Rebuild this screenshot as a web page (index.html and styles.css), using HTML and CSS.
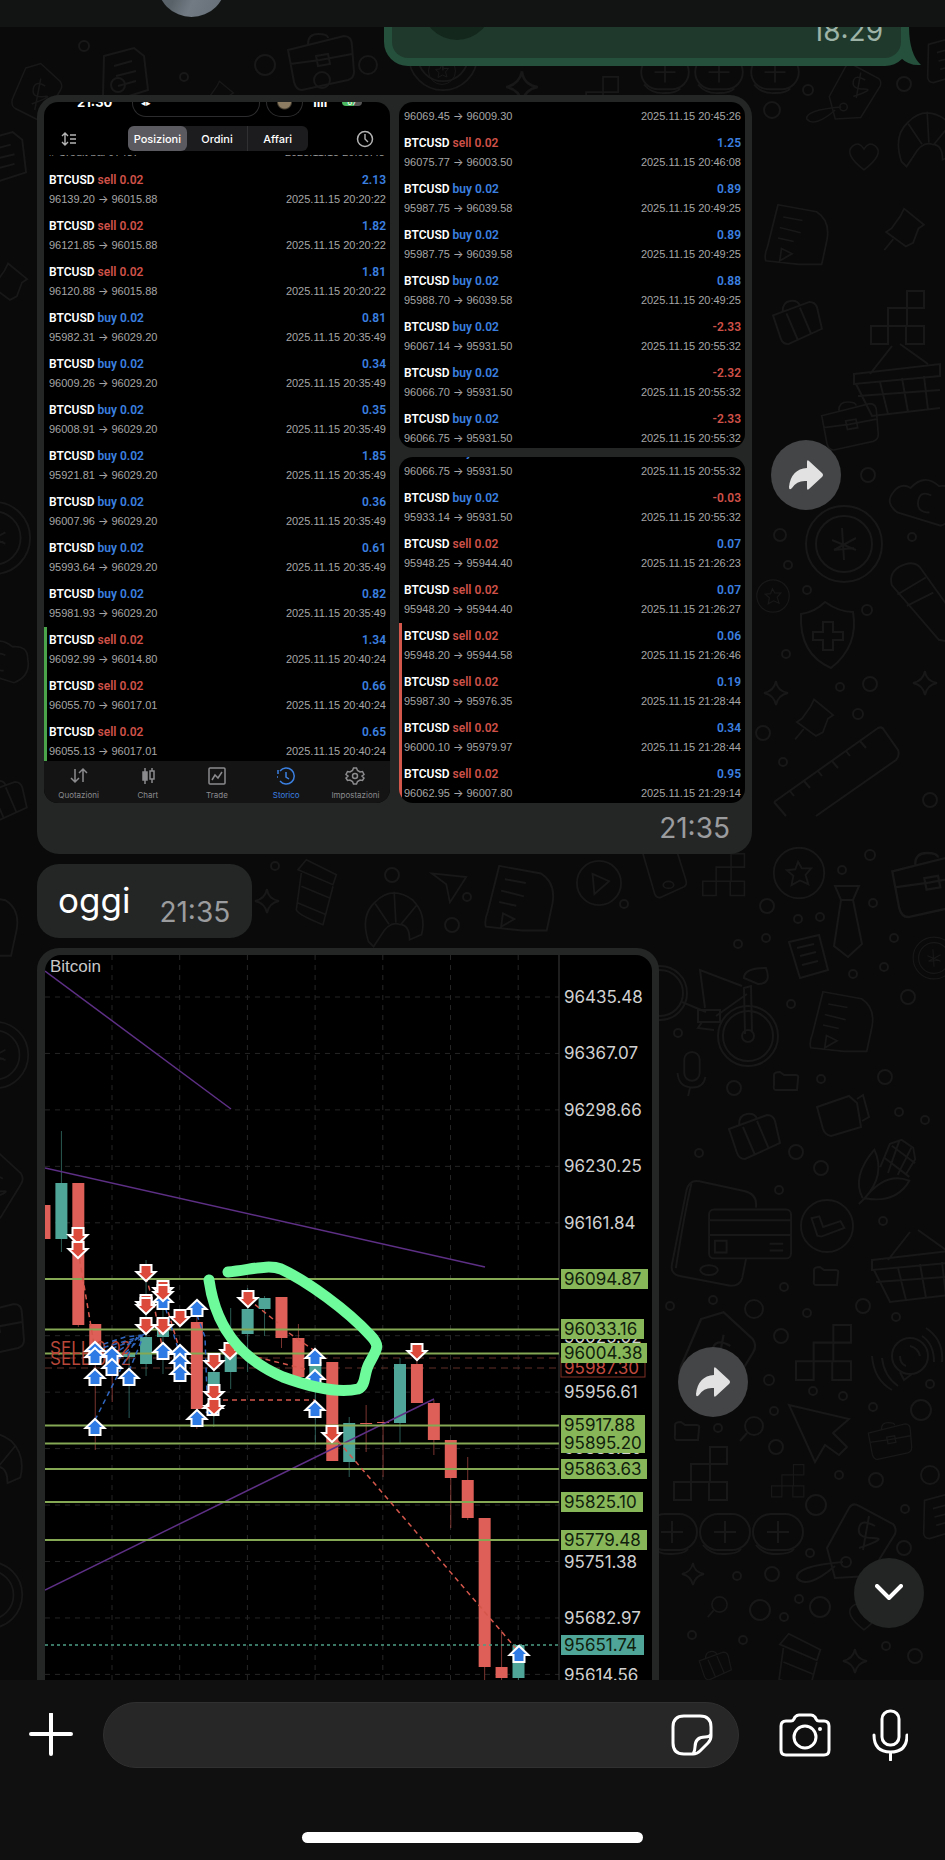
FILE: index.html
```html
<!DOCTYPE html>
<html lang="it">
<head>
  <meta charset="UTF-8" />
  <meta name="viewport" content="width=device-width, initial-scale=1.0" />
  <title>Chat</title>
  <link rel="stylesheet" href="styles.css">
</head>
<body>
  <header class="topbar">
    <div class="avatar"></div>
  </header>

  <main class="chat">
    <svg class="wallpaper" id="wallpaper" width="945" height="1653" viewBox="0 27 945 1653" aria-hidden="true">
      <defs>
        <symbol id="d-tag" viewBox="0 0 70 80" overflow="visible"><path d="M20 8 40 2 66 26Q70 32 66 38L44 74Q40 80 34 76L6 62Q0 58 2 50Z"/><path d="M46 32Q32 24 30 36T44 46T28 56M40 22 32 64"/></symbol>
        <symbol id="d-price" viewBox="0 0 102 80" overflow="visible"><path d="M42 76 34 46 56 6Q60 0 66 4L100 22Q104 26 102 32L76 74ZM82 24Q68 16 66 26T80 36T66 46M76 14 70 48"/><circle cx="53" cy="60" r="5"/><path d="M50 60Q2 64 4 76Q14 88 42 64"/></symbol>
        <symbol id="d-pill" viewBox="0 0 52 42" overflow="visible"><rect x="1" y="1" width="50" height="36" rx="18"/><path d="M4 32Q12 42 26 41Q38 41 42 36M26 8V30M15 19H37"/></symbol>
        <symbol id="d-cursor" viewBox="0 0 64 60" overflow="visible"><path d="M2 2 62 16 46 30 60 44 52 52 38 42 28 59Z"/></symbol>
        <symbol id="d-doc" viewBox="0 0 50 60" overflow="visible"><path d="M4 10 34 2 44 10 48 44 10 56Q4 56 3 50Z"/><path d="M14 20 32 15M16 30 36 25M18 40 36 35"/></symbol>
        <symbol id="d-pin" viewBox="0 0 50 60" overflow="visible"><path d="M24 4 46 22 40 26 34 42 26 46 4 30 10 26 20 12ZM12 38 2 50"/></symbol>
        <symbol id="d-case" viewBox="0 0 70 60" overflow="visible"><path d="M2 18 58 4Q66 4 66 14L68 40Q68 46 62 48L16 58Q10 58 8 50ZM22 12Q22 2 32 2T42 6M4 32 34 28 66 22M30 24 42 22 44 32 32 34Z"/></symbol>
        <symbol id="d-star" viewBox="0 0 60 60" overflow="visible"><circle cx="30" cy="30" r="27"/><path d="M29 18 33 25 43 25 37 32 40 42 31 38 22 43 24 33 17 27 26 26Z"/></symbol>
        <symbol id="d-coin" viewBox="0 0 80 80" overflow="visible"><circle cx="40" cy="40" r="38"/><circle cx="40" cy="40" r="28"/><path d="M38 24 40 56M28 36 52 46M30 46 52 34M30 46 50 44"/></symbol>
        <symbol id="d-tie" viewBox="0 0 30 74" overflow="visible"><path d="M2 2H26L20 16H8ZM8 16 1 62 15 73 29 60 20 16"/></symbol>
        <symbol id="d-note" viewBox="0 0 40 46" overflow="visible"><path d="M1 8 31 1 40 36 12 44ZM9 14 26 10M12 22 28 18M14 31 30 27"/></symbol>
        <symbol id="d-bike" viewBox="0 0 130 100" overflow="visible"><circle cx="98" cy="68" r="30"/><circle cx="98" cy="68" r="25"/><circle cx="98" cy="68" r="6"/><circle cx="10" cy="25" r="27"/><circle cx="10" cy="25" r="23"/><path d="M95 66 94 20 101 18 102 64M92 18 50 2 55 40M97 26 66 48M32 34 56 44M94 10Q94 0 116 0Q122 16 108 16ZM48 42H70V54H48ZM52 54 48 60 64 62"/></symbol>
        <symbol id="d-mic" viewBox="0 0 30 50" overflow="visible"><rect x="8" y="2" width="16" height="30" rx="8"/><path d="M1 24Q2 38 15 39T30 28M14 39 12 48"/></symbol>
        <symbol id="d-bag" viewBox="0 0 54 48" overflow="visible"><path d="M2 16 40 2Q46 2 48 8L53 30 18 46Q12 46 10 40ZM12 12Q12 2 20 1T30 6M16 14 28 42M30 8 42 36"/></symbol>
        <symbol id="d-cam" viewBox="0 0 54 44" overflow="visible"><path d="M2 14 34 3 42 10 46 34 16 43Q10 42 8 36ZM42 6 48 2 54 24 47 28"/></symbol>
        <symbol id="d-corn" viewBox="0 0 62 70" overflow="visible"><path d="M6 62Q-6 40 18 12Q30 38 8 62Q30 34 54 44Q40 68 8 62L2 68M24 30 34 6 46 2 58 10 60 22 50 38M28 20 54 40M36 8 60 26M44 2 32 36M56 10 42 38"/></symbol>
        <symbol id="d-phone" viewBox="0 0 125 112" overflow="visible"><path d="M88 30Q90 16 76 13L30 3Q20 1 17 12L2 88Q0 98 10 100L62 110Q72 110 74 102L78 82"/><path d="M22 5Q14 40 6 92"/><rect x="40" y="32" width="84" height="50" rx="5"/><path d="M40 43H124M40 58H124M46 64H58V76H46ZM102 67H116M102 74H116"/><ellipse cx="40" cy="94" rx="9" ry="5"/></symbol>
        <symbol id="d-mobile" viewBox="0 0 52 60" overflow="visible"><path d="M0 0 14 48Q16 54 22 52L48 40Q52 38 50 32L40 0"/><ellipse cx="30" cy="38" rx="6" ry="4"/></symbol>
        <symbol id="d-check" viewBox="0 0 56 56" overflow="visible"><circle cx="28" cy="28" r="27"/><path d="M12 20 20 18 24 29 42 23 46 30 22 39 18 38Z"/></symbol>
        <symbol id="d-basket" viewBox="0 0 90 76" overflow="visible"><path d="M4 34 90 24V36L4 44ZM6 44 22 76 90 68M8 56 90 50M30 42 38 74M52 38 58 72M74 36 78 70M20 34 42 6M50 4 78 24"/></symbol>
        <symbol id="d-folder" viewBox="0 0 28 20" overflow="visible"><path d="M2 4Q2 1 8 1L12 4H24Q27 4 26 8L25 19H4Q1 19 2 14Z"/></symbol>
        <symbol id="d-spark" viewBox="0 0 26 26" overflow="visible"><path d="M13 1Q14 11 25 13Q15 15 13 25Q11 15 1 13Q11 11 13 1Z"/></symbol>
        <symbol id="d-shield" viewBox="0 0 60 70" overflow="visible"><path d="M4 14Q18 12 28 2Q42 12 56 12Q62 46 34 68Q2 54 4 14ZM26 22H36V32H46V40H36V50H26V40H16V32H26Z"/></symbol>
        <symbol id="d-pencil" viewBox="0 0 70 90" overflow="visible"><path d="M4 26Q0 10 18 4Q30 0 36 10L76 66L74 88L54 84ZM10 36 40 18M20 48 48 34"/></symbol>
        <symbol id="d-ruler" viewBox="0 0 130 90" overflow="visible"><path d="M2 78 106 4Q110 2 112 6L126 26Q128 32 124 36L44 92M2 78 14 92M18 67 22 72M32 57 38 64M46 47 50 52M60 37 66 44M74 27 78 32M88 17 94 24"/></symbol>
        <symbol id="d-cloud" viewBox="0 0 70 50" overflow="visible"><path d="M10 34Q-4 24 6 12Q14 2 24 8Q38-8 54 6Q72 4 72 20Q76 40 56 48ZM46 16Q34 10 32 22T44 34"/></symbol>
        <symbol id="d-cup" viewBox="0 0 56 84" overflow="visible"><path d="M14 2 50 20 46 32 4 14ZM8 18 2 62Q4 68 34 80L46 34M8 34 42 48M4 54 38 68"/></symbol>
        <symbol id="d-roll" viewBox="0 0 70 70" overflow="visible"><path d="M4 60Q-6 30 12 14Q32-6 56 12Q72 28 66 52L52 58Q52 40 40 40Q28 36 18 54L10 66ZM12 16 28 40M34 2 36 38M60 18 42 40"/></symbol>
        <symbol id="d-plane" viewBox="0 0 42 34" overflow="visible"><path d="M2 2 40 6 22 34 18 14Z"/></symbol>
        <symbol id="d-play" viewBox="0 0 50 56" overflow="visible"><circle cx="25" cy="28" r="24"/><path d="M18 18 36 26 20 40Z"/></symbol>
        <symbol id="d-page" viewBox="0 0 80 80" overflow="visible"><path d="M16 2 60 10Q76 20 72 42L66 70H40L2 66Q0 60 4 50ZM22 16 44 20M18 28 42 34M16 40 34 44M20 52 32 58 18 66Z"/></symbol>
        <symbol id="d-blocks" viewBox="0 0 56 56" overflow="visible"><path d="M1 36H18V54H1ZM18 18H37V36H18ZM37 1H54V18H37ZM36 36H54V54H36Z"/></symbol>
        <symbol id="d-heart" viewBox="0 0 40 36" overflow="visible"><path d="M20 34Q-6 14 6 4Q14-2 20 8Q26-2 34 4Q46 14 20 34Z"/></symbol>
        <symbol id="d-lens" viewBox="0 0 26 26" overflow="visible"><circle cx="16" cy="10" r="9"/><path d="M9 17 2 25"/></symbol>
        <symbol id="d-voice" viewBox="0 0 72 64" overflow="visible"><circle cx="38" cy="28" r="18"/><path d="M28 44 32 52 40 46M38 18Q46 20 48 28M28 28Q28 36 34 38M50 8Q62 16 62 34M54 0Q72 12 70 34M10 30Q12 48 26 58M0 28Q2 52 20 62"/></symbol>
      </defs>
    </svg>

    <div class="bubble bubble-out">
      <div class="quote"><span class="quote-dot"></span></div>
      <time>18:29</time>
      <svg class="tail" width="20" height="40" viewBox="0 0 20 40" aria-hidden="true"><path d="M0 0H8Q8 28 20 39Q8 40 0 32Z" fill="#25503c"/></svg>
    </div>

    <div class="message message-album">
      <div class="bubble album">
        <div class="album-grid">
          <section class="shot shot-tall">
            <div class="shot-status">
              <b>21:30</b>
              <span class="island">◂▸</span>
              <span class="island-dot"></span>
              <span class="signal">ııll</span>
              <span class="battery">67</span>
            </div>
            <div class="shot-toolbar">
              <svg width="16" height="16" viewBox="0 0 16 16" aria-hidden="true"><path d="M4 2V14M1 5 4 2 7 5M1 11 4 14 7 11M9 4H15M9 8H15M9 12H15" fill="none" stroke="#b4b4b4" stroke-width="1.4"/></svg>
              <div class="segments">
                <button class="active" type="button">Posizioni</button>
                <button type="button">Ordini</button>
                <button type="button">Affari</button>
              </div>
              <svg width="18" height="18" viewBox="0 0 18 18" aria-hidden="true"><path d="M9 4V9L12 12" fill="none" stroke="#b4b4b4" stroke-width="1.4"/><circle cx="9" cy="9" r="7.5" fill="none" stroke="#b4b4b4" stroke-width="1.5"/></svg>
            </div>
            <div class="cut-line"><span># Credit bal 97487</span><span>2025.11.15 20:00:48</span></div>
            <div class="trades trades-first" id="tradesA"></div>
            <nav class="tabbar">
              <a href="#"><svg viewBox="0 0 20 20" aria-hidden="true"><path d="M6 3V16M2 12 6 16 10 12M14 16V3M10 7 14 3 18 7"/></svg>Quotazioni</a>
              <a href="#"><svg viewBox="0 0 20 20" aria-hidden="true"><path d="M7 2V18M14 2V5M14 13V17"/><path d="M5 6H9V14H5Z" fill="currentColor"/><path d="M12 5H16V13H12Z"/></svg>Chart</a>
              <a href="#"><svg viewBox="0 0 20 20" aria-hidden="true"><rect x="2" y="2" width="16" height="16" rx="1"/><path d="M5 14 8 9 11 12 15 6"/></svg>Trade</a>
              <a href="#" class="active"><svg viewBox="0 0 20 20" aria-hidden="true"><path d="M4 5A8 8 0 1 1 4 15M2 8V4M2 11H1M10 6V11L13 13"/></svg>Storico</a>
              <a href="#"><svg viewBox="0 0 20 20" aria-hidden="true"><circle cx="10" cy="10" r="2.5"/><path d="M8.500 2H11.500L12.500 4.500 15 6 17.500 5.500 19 8.500 17 10 19 12 17.500 14.500 15 14 12.500 15.500 11.500 18H8.500L7.500 15.500 5 14 2.500 14.500 1 12 3 10 1 8.500 2.500 5.500 5 6 7.500 4.500Z"/></svg>Impostazioni</a>
            </nav>
          </section>
          <section class="shot"><div class="trades" id="tradesB"></div></section>
          <section class="shot"><div class="trades" id="tradesC"></div></section>
        </div>
        <time>21:35</time>
      </div>
      <button class="round forward" type="button" aria-label="Inoltra">
        <svg width="36" height="32" viewBox="0 0 36 32" aria-hidden="true"><path d="M19 3Q19 0 21 2L34 14Q36 16 34 18L21 30Q19 32 19 29V22Q9 21 4 29Q1 32 1 28Q3 10 19 9Z" fill="#e2e2e2"/></svg>
      </button>
    </div>

    <div class="bubble text-bubble">
      <p>oggi</p>
      <time>21:35</time>
    </div>

    <div class="message message-chart">
      <div class="bubble chart-bubble">
        <svg class="chart" id="chart" viewBox="0 0 607 760" role="img" aria-label="Bitcoin">
          <defs>
            <path id="down" d="M-5.500-8H5.500V-1H9.500L0 8-9.500-1H-5.500Z" fill="#dc4a3c" stroke="#fff" stroke-width="2"/>
            <path id="up" d="M-5.500 8H5.500V1H9.500L0-8-9.500 1H-5.500Z" fill="#2f7be6" stroke="#fff" stroke-width="2"/>
          </defs>
        </svg>
      </div>
      <button class="round forward" type="button" aria-label="Inoltra">
        <svg width="36" height="32" viewBox="0 0 36 32" aria-hidden="true"><path d="M19 3Q19 0 21 2L34 14Q36 16 34 18L21 30Q19 32 19 29V22Q9 21 4 29Q1 32 1 28Q3 10 19 9Z" fill="#e2e2e2"/></svg>
      </button>
    </div>

    <button class="round scroll-down" type="button" aria-label="Vai in fondo">
      <svg width="28" height="18" viewBox="0 0 28 18" aria-hidden="true"><path d="M2 2 14 14 26 2" fill="none" stroke="#fff" stroke-width="4" stroke-linecap="round" stroke-linejoin="round"/></svg>
    </button>
  </main>

  <footer class="composer">
    <div class="composer-row">
      <button type="button" aria-label="Allega">
        <svg width="44" height="44" viewBox="0 0 44 44" aria-hidden="true"><path d="M22 1V41M2 21H42"/></svg>
      </button>
      <label class="field">
        <input type="text" aria-label="Messaggio">
        <svg width="42" height="42" viewBox="0 0 42 42" aria-hidden="true"><path d="M22 40H13Q2 40 2 29V13Q2 2 13 2H29Q40 2 40 13V22Q40 26 37 29L29 37Q26 40 22 40ZM22 40Q24 37 24 33Q24 23 34 23Q39 23 40 20"/></svg>
      </label>
      <button type="button" aria-label="Fotocamera">
        <svg width="52" height="44" viewBox="0 0 52 44" aria-hidden="true"><path d="M7 8H12Q14 8 15 6L16 4Q18 2 20 2H32Q34 2 36 4L37 6Q38 8 40 8H45Q50 8 50 13V37Q50 42 45 42H7Q2 42 2 37V13Q2 8 7 8Z"/><circle cx="26" cy="24" r="11"/><circle cx="41" cy="16" r="2" class="fill"/></svg>
      </button>
      <button type="button" aria-label="Registra">
        <svg width="36" height="52" viewBox="0 0 36 52" aria-hidden="true"><rect x="10" y="2" width="17" height="34" rx="8"/><path d="M2 26Q2 43 18.500 43T35 26M18.500 43V51"/></svg>
      </button>
    </div>
    <div class="home-bar"></div>
  </footer>

  <script src="script.js"></script>
</body>
</html>
```
FILE: styles.css
```css
* {
  box-sizing: border-box;
}
body {
  margin: 0;
  height: 100vh;
  display: flex;
  flex-direction: column;
  background: #0a0a0a;
  color: #fff;
  font-family: Inter, "Liberation Sans", sans-serif;
  overflow: hidden;
}
button {
  padding: 0;
  border: none;
  background: none;
  color: inherit;
  font: inherit;
}
svg {
  display: block;
}
time {
  font-size: 28px;
  line-height: 32px;
  color: #9b9c9e;
}

/* header */
.topbar {
  flex: none;
  height: 27px;
  padding-left: 157px;
  display: flex;
  align-items: flex-end;
  overflow: hidden;
  background: #111413;
}
.avatar {
  flex: none;
  width: 69px;
  height: 69px;
  margin-bottom: 10px;
  border-radius: 50%;
  background: linear-gradient(115deg, #5a6269 40%, #727b84 60%, #646c74);
}

/* chat */
.chat {
  flex: 1;
  min-height: 0;
  position: relative;
  padding: 0 24px 0 37px;
  display: flex;
  flex-direction: column;
  align-items: flex-start;
  overflow: hidden;
}
.wallpaper {
  position: absolute;
  top: 0;
  left: 0;
  fill: none;
  stroke: #181819;
  stroke-width: 2;
}
.message,
.bubble {
  position: relative;
  flex: none;
}
.message {
  width: 100%;
  display: flex;
  align-items: center;
  gap: 19px;
}
.bubble {
  background: #242626;
  border-radius: 22px;
}

.bubble-out {
  align-self: flex-end;
  width: 525px;
  height: 39px;
  margin-right: 12px;
  padding: 0 8px 8px;
  background: #25503c;
  border-radius: 0 0 24px 24px;
}
.quote {
  height: 31px;
  padding-left: 30px;
  overflow: hidden;
  border-radius: 0 0 16px 16px;
  background: #1f3a2d;
}
.quote-dot {
  display: block;
  width: 70px;
  height: 70px;
  margin-top: -57px;
  border-radius: 50%;
  background: #14271d;
}
.bubble-out time {
  position: absolute;
  right: 26px;
  top: 0;
  height: 20px;
  display: flex;
  align-items: flex-end;
  overflow: hidden;
  color: #9db3a7;
}
.tail {
  position: absolute;
  right: -12px;
  bottom: 0;
}

/* screenshots */
.message-album {
  margin-top: 29px;
}
.album {
  flex: 0 1 715px;
  padding: 7px 7px 0;
}
.album-grid {
  display: grid;
  grid-template-columns: 1fr 1fr;
  grid-template-rows: 346px 346px;
  gap: 9px;
}
.album > time,
.text-bubble time {
  display: block;
}
.album > time {
  padding: 9px 15px 10px;
  text-align: right;
}
.shot {
  overflow: hidden;
  border-radius: 14px;
  background: #000;
}
.shot-tall {
  grid-row: span 2;
  display: flex;
  flex-direction: column;
}
.shot-status {
  flex: none;
  height: 20px;
  padding: 0 28px 0 33px;
  display: flex;
  align-items: flex-start;
  font-size: 13px;
  line-height: 1px;
}
.shot-status .island {
  width: 128px;
  height: 15px;
  margin-left: 20px;
  padding-left: 8px;
  border: 1px solid #2c2c2e;
  border-top: none;
  border-radius: 0 0 14px 14px;
  font-size: 9px;
}
.island-dot {
  width: 37px;
  height: 15px;
  margin-left: 6px;
  border: 1px solid #2c2c2e;
  border-top: none;
  border-radius: 0 0 18px 18px;
  background: radial-gradient(circle at 50% 0, #8c7d62 6px, #000 8px);
}
.signal {
  margin-left: 10px;
  font-weight: 700;
}
.battery {
  width: 20px;
  height: 4px;
  margin-left: auto;
  border-radius: 0 0 4px 4px;
  background: linear-gradient(90deg, #4cb860 60%, #555 60%);
  font-size: 8px;
  text-align: center;
}
.shot-toolbar {
  flex: none;
  height: 33px;
  padding: 0 16px 0 17px;
  display: flex;
  align-items: center;
  justify-content: space-between;
}
.segments {
  width: 180px;
  height: 25px;
  margin-left: 2px;
  display: flex;
  border-radius: 6px;
  background: #1c1c1e;
  font-size: 11px;
  font-weight: 500;
}
.segments button {
  flex: 1;
  border-radius: 6px;
}
.segments .active {
  background: #5b5a60;
}
.segments button:last-child {
  border-left: 1px solid #303033;
  border-radius: 0;
}
.cut-line {
  flex: none;
  height: 3px;
  padding: 0 5px;
  display: flex;
  align-items: flex-end;
  justify-content: space-between;
  overflow: hidden;
  color: #999;
  font: 11px/12px "Liberation Sans", sans-serif;
}
.trades {
  font-family: "Liberation Sans", Arial, sans-serif;
}
.trades-first {
  flex: 1;
  min-height: 0;
  padding-top: 9px;
  overflow: hidden;
}
.trade {
  height: 46px;
  padding: 0 4px 6px 2px;
  display: flex;
  flex-direction: column;
  justify-content: flex-end;
  border-left: 3px solid transparent;
}
.trade.cut {
  height: 28px;
  overflow: hidden;
}
.trade.mark-green {
  border-left-color: #4aa54a;
}
.trade.mark-red {
  border-left-color: #d4574c;
}
.line {
  flex: none;
  display: flex;
  justify-content: space-between;
}
.deal {
  font: 600 12px/22px Roboto, "Open Sans", sans-serif;
}
.prices {
  color: #a6a6a6;
  font-size: 11px;
  line-height: 16px;
}
.arrow {
  font-family: Inter, sans-serif;
}
.red {
  color: #cf5148;
}
.blue {
  color: #3b80e0;
}
.tabbar {
  flex: none;
  height: 42px;
  display: flex;
  background: #141415;
}
.tabbar a {
  flex: 1;
  display: flex;
  flex-direction: column;
  align-items: center;
  gap: 4px;
  padding-top: 5px;
  color: #8b8b8e;
  font-size: 8px;
  line-height: 10px;
  text-decoration: none;
}
.tabbar svg {
  width: 20px;
  height: 20px;
  fill: none;
  stroke: currentColor;
  stroke-width: 1.5;
}
.tabbar a.active {
  color: #3b80e0;
}

/* round buttons */
.round {
  flex: none;
  width: 70px;
  height: 70px;
  display: flex;
  align-items: center;
  justify-content: center;
  border-radius: 50%;
}
.forward {
  position: relative;
  background: #444547;
}
.scroll-down {
  position: absolute;
  right: 21px;
  bottom: 52px;
  background: #232525;
}

.text-bubble {
  margin-top: 10px;
  padding: 14px 22px 10px 21px;
  display: flex;
  align-items: flex-end;
  gap: 29px;
}
.text-bubble p {
  margin: 0;
  padding-bottom: 6px;
  font-size: 35px;
  line-height: 44px;
}

/* chart */
.message-chart {
  margin-top: 10px;
}
.chart-bubble {
  flex: 0 1 622px;
  padding: 7px 7px 7px 8px;
}
.message-chart .forward {
  margin-top: 94px;
}
.chart {
  width: 100%;
  border-radius: 16px 16px 0 0;
  background: #000;
  font-size: 17px;
}
.grid-line {
  stroke: #252525;
  stroke-dasharray: 5 5;
}
.axis {
  stroke: #3c3c3c;
}
.trend {
  stroke: #5d2f85;
  stroke-width: 1.5;
}
.level {
  stroke: #84a853;
  stroke-width: 2;
}
.last {
  stroke: #4d9e85;
  stroke-width: 1.5;
  stroke-dasharray: 3 3;
}
.pending {
  stroke: #63302a;
  stroke-dasharray: 7 5;
}
.link {
  fill: none;
  stroke-width: 1.5;
  stroke-dasharray: 5 4;
}
.scribble {
  fill: none;
  stroke: #6dfb9b;
  stroke-width: 11;
  stroke-linecap: round;
  stroke-linejoin: round;
}

/* composer */
.composer {
  position: relative;
  flex: none;
  height: 180px;
  padding: 22px 0 17px;
  display: flex;
  flex-direction: column;
  align-items: center;
  justify-content: space-between;
  background: #101010;
}
.composer-row {
  width: 100%;
  padding: 0 37px 0 29px;
  display: flex;
  align-items: center;
}
.composer svg {
  fill: none;
  stroke: #fff;
  stroke-width: 3;
  stroke-linecap: round;
  stroke-linejoin: round;
}
.composer button:first-child svg {
  stroke-width: 4;
}
.composer .fill {
  fill: #fff;
  stroke: none;
}
.field {
  flex: 1;
  height: 66px;
  margin: 0 40px 0 30px;
  padding: 0 25px;
  display: flex;
  align-items: center;
  border: 1px solid #303030;
  border-radius: 33px;
  background: #272727;
}
.field input {
  flex: 1;
  min-width: 0;
  border: none;
  outline: none;
  background: none;
  color: #fff;
  font: 30px Inter, sans-serif;
}
.composer-row > button:last-child {
  margin-left: 41px;
}
.home-bar {
  width: 36%;
  height: 11px;
  border-radius: 6px;
  background: #fff;
}
```
FILE: script.js
```js
// trades: side, open, close, time, profit, mark
const tradesA = [
  ["sell", "96139.20", "96015.88", "20:20:22", "2.13"],
  ["sell", "96121.85", "96015.88", "20:20:22", "1.82"],
  ["sell", "96120.88", "96015.88", "20:20:22", "1.81"],
  ["buy", "95982.31", "96029.20", "20:35:49", "0.81"],
  ["buy", "96009.26", "96029.20", "20:35:49", "0.34"],
  ["buy", "96008.91", "96029.20", "20:35:49", "0.35"],
  ["buy", "95921.81", "96029.20", "20:35:49", "1.85"],
  ["buy", "96007.96", "96029.20", "20:35:49", "0.36"],
  ["buy", "95993.64", "96029.20", "20:35:49", "0.61"],
  ["buy", "95981.93", "96029.20", "20:35:49", "0.82"],
  ["sell", "96092.99", "96014.80", "20:40:24", "1.34", "mark-green"],
  ["sell", "96055.70", "96017.01", "20:40:24", "0.66", "mark-green"],
  ["sell", "96055.13", "96017.01", "20:40:24", "0.65", "mark-green"]
];
const tradesB = [
  ["", "96069.45", "96009.30", "20:45:26", "", "cut"],
  ["sell", "96075.77", "96003.50", "20:46:08", "1.25"],
  ["buy", "95987.75", "96039.58", "20:49:25", "0.89"],
  ["buy", "95987.75", "96039.58", "20:49:25", "0.89"],
  ["buy", "95988.70", "96039.58", "20:49:25", "0.88"],
  ["buy", "96067.14", "95931.50", "20:55:32", "-2.33"],
  ["buy", "96066.70", "95931.50", "20:55:32", "-2.32"],
  ["buy", "96066.75", "95931.50", "20:55:32", "-2.33"]
];
const tradesC = [
  ["buy", "96066.75", "95931.50", "20:55:32", "", "cut"],
  ["buy", "95933.14", "95931.50", "20:55:32", "-0.03"],
  ["sell", "95948.25", "95944.40", "21:26:23", "0.07"],
  ["sell", "95948.20", "95944.40", "21:26:27", "0.07"],
  ["sell", "95948.20", "95944.58", "21:26:46", "0.06", "mark-red"],
  ["sell", "95987.30", "95976.35", "21:28:44", "0.19", "mark-red"],
  ["sell", "96000.10", "95979.97", "21:28:44", "0.34", "mark-red"],
  ["sell", "96062.95", "96007.80", "21:29:14", "0.95", "mark-red"]
];

function renderTrades(id, rows) {
  document.getElementById(id).innerHTML = rows.map(([side, open, close, time, profit, mark = ""]) => {
    const deal = side ? `
      <div class="line deal">
        <span>BTCUSD <span class="${side === "sell" ? "red" : "blue"}">${side} 0.02</span></span>
        <span class="${profit < 0 ? "red" : "blue"}">${profit}</span>
      </div>` : "";
    return `<div class="trade ${mark}">${deal}
      <div class="line prices"><span>${open} <span class="arrow">→</span> ${close}</span><span>2025.11.15 ${time}</span></div>
    </div>`;
  }).join("");
}
renderTrades("tradesA", tradesA);
renderTrades("tradesB", tradesB);
renderTrades("tradesC", tradesC);

// candles: slot, colour, body top, body bottom, wick top, wick bottom
const RED = "#dd5f57";
const TEAL = "#4fa598";
const candles = [
  [-1, RED, 250, 284, 250, 284], [0, TEAL, 228, 284, 176, 297], [1, RED, 228, 370, 228, 372],
  [2, RED, 369, 397, 369, 495], [3, RED, 395, 410, 390, 447], [4, TEAL, 398, 402, 396, 463],
  [5, TEAL, 382, 409, 305, 421], [6, TEAL, 373, 382, 332, 419], [8, RED, 367, 454, 345, 474],
  [9, TEAL, 417, 437, 412, 472], [10, TEAL, 391, 417, 353, 434], [11, TEAL, 354, 379, 333, 417],
  [12, TEAL, 343, 354, 341, 381], [13, RED, 342, 383, 342, 393], [14, RED, 383, 422, 369, 424],
  [15, TEAL, 407, 422, 395, 490], [16, RED, 407, 506, 407, 506], [17, TEAL, 468, 507, 462, 522],
  [18, RED, 468, 469, 450, 497], [19, RED, 467, 468, 465, 522], [20, TEAL, 409, 468, 403, 488],
  [21, RED, 409, 448, 405, 448], [22, RED, 448, 485, 445, 500], [23, RED, 485, 523, 485, 573],
  [24, RED, 525, 563, 502, 565], [25, RED, 563, 712, 563, 726], [26, RED, 712, 723, 675, 726],
  [27, TEAL, 690, 723, 690, 726]
];
const arrows = [
  ["up", 118, 346], ["up", 50, 395], ["up", 50, 401], ["up", 67, 400], ["up", 67, 412],
  ["up", 84, 422], ["up", 50, 422], ["up", 50, 472], ["up", 118, 396], ["up", 135, 398],
  ["up", 135, 407], ["up", 135, 418], ["up", 152, 353], ["up", 152, 463], ["up", 168, 452],
  ["up", 270, 402], ["up", 270, 423], ["up", 270, 454], ["up", 474, 699],
  ["down", 33, 281], ["down", 33, 295], ["down", 101, 318], ["down", 101, 348], ["down", 101, 351],
  ["down", 101, 371], ["down", 118, 334], ["down", 118, 338], ["down", 118, 371], ["down", 135, 363],
  ["down", 203, 344], ["down", 185, 396], ["down", 169, 407], ["down", 169, 438], ["down", 169, 452],
  ["down", 287, 479], ["down", 372, 397]
];
// text, y, tag width (0 = plain), tag colour
const prices = [
  ["96435.48", 42], ["96367.07", 98], ["96298.66", 155], ["96230.25", 211], ["96161.84", 268],
  ["96025.02", 382], ["95956.61", 437], ["95888.20", 493], ["95751.38", 607], ["95682.97", 663],
  ["95614.56", 720], ["96094.87", 324, 87, "#87b659"], ["96033.16", 374, 83, "#87b659"],
  ["96004.38", 398, 86, "#87b659"], ["95917.88", 470, 84, "#87b659"], ["95895.20", 488, 84, "#87b659"],
  ["95863.63", 514, 86, "#87b659"], ["95825.10", 547, 82, "#87b659"], ["95779.48", 585, 86, "#87b659"],
  ["95651.74", 690, 83, "#4fa598"]
];

function line(x1, y1, x2, y2, cls) {
  return `<line class="${cls}" x1="${x1}" y1="${y1}" x2="${x2}" y2="${y2}"/>`;
}
function drawChart() {
  let s = "";
  for (let i = 0; i < 13; i++) s += line(0, 42 + i * 56.45, 514, 42 + i * 56.45, "grid-line");
  for (let i = 0; i < 7; i++) s += line(67 + i * 67.7, 0, 67 + i * 67.7, 760, "grid-line");
  s += line(514, 0, 514, 760, "axis");
  s += line(0, 403, 514, 403, "pending") + line(0, 413, 514, 413, "pending");
  candles.forEach(([slot, color, top, bottom, high, low]) => {
    const x = 16.4 + slot * 16.93;
    s += `<line x1="${x}" y1="${high}" x2="${x}" y2="${low}" stroke="${color}" opacity=".55"/>`;
    s += `<rect x="${x - 6}" y="${top}" width="12" height="${bottom - top}" fill="${color}"/>`;
  });
  s += line(0, 16, 186, 154, "trend") + line(0, 213, 440, 312, "trend") + line(0, 635, 389, 444, "trend");
  [324, 374.5, 398.5, 470.5, 488.5, 514, 547, 585].forEach(y => { s += line(0, y, 514, y, "level"); });
  s += line(0, 690, 514, 690, "last");
  s += `<text x="5" y="399" fill="#b8473a">SELL 0.02</text><text x="5" y="410" fill="#b8473a">SELL 0.02</text>`;
  s += `<path class="link" stroke="#2f66c0" d="M50 465 92 382M50 395 101 380M50 400 92 384M67 410 95 384M67 400 101 378M84 416 98 382M50 392 80 382 98 380M152 360 160 382 162 440M152 460 169 455M118 345 135 400"/>`;
  s += `<path class="link" stroke="#d4574c" d="M33 295 50 395M101 322 109 350 118 396M118 340 135 396M203 344 233 368M244 378 270 396M203 400 260 414M169 445H270M287 479 474 697"/>`;
  arrows.forEach(([kind, x, y]) => { s += `<use href="#${kind}" x="${x}" y="${y}"/>`; });
  s += `<path class="scribble" d="M183 317C205 315 223 309 236 314C262 326 302 355 325 380C335 390 333 393 325 407C318 418 322 430 313 434C295 438 268 433 238 422C205 408 172 382 164 325"/>`;
  s += `<rect x="516" y="403" width="84" height="19" fill="#000" stroke="#7c2e26"/><text x="519" y="419" fill="#c14a3e">95987.30</text>`;
  prices.forEach(([text, y, width, color]) => {
    if (width) s += `<rect x="516" y="${y - 10}" width="${width}" height="20" fill="${color}"/>`;
    s += `<text x="519" y="${y + 6}" fill="${width ? "#10200c" : "#d0d0d0"}">${text}</text>`;
  });
  s += `<text x="5" y="17" fill="#c8c8c8" font-family="Liberation Sans">Bitcoin</text>`;
  document.getElementById("chart").innerHTML += s;
}
drawChart();

// wallpaper doodles: name, x, y, width, height
const doodles = [
  ["tag", 4, 62, 66, 60], ["doc", 100, 46, 50, 60], ["pin", 204, 76, 32, 44], ["case", 284, 32, 74, 60],
  ["coin", 398, 20, 90, 72], ["star", 420, 56, 44, 30], ["spark", 500, 70, 44, 34], ["blocks", 570, 76, 50, 50],
  ["pill", 640, 54, 50, 40], ["pill", 694, 54, 50, 40], ["pill", 750, 54, 50, 40], ["price", 794, 62, 96, 60],
  ["doc", 924, 36, 44, 50], ["heart", 848, 142, 32, 30], ["roll", 898, 110, 60, 60],
  ["page", 764, 200, 70, 76], ["pin", 880, 205, 50, 54], ["blocks", 870, 290, 56, 56], ["bag", 770, 300, 54, 46],
  ["basket", 850, 340, 90, 76], ["case", 820, 400, 60, 52],
  ["cloud", 888, 480, 66, 48], ["coin", 804, 504, 80, 80], ["pencil", 888, 560, 66, 86], ["star", 755, 578, 36, 36],
  ["shield", 797, 600, 60, 70], ["spark", 763, 680, 26, 26], ["spark", 912, 670, 26, 26], ["pin", 792, 696, 46, 52],
  ["ruler", 772, 724, 130, 90], ["cup", 290, 858, 56, 70], ["roll", 358, 890, 74, 60],
  ["plane", 430, 870, 38, 34], ["page", 484, 862, 76, 80], ["play", 576, 856, 46, 54], ["mobile", 640, 852, 50, 52],
  ["blocks", 702, 850, 44, 50], ["star", 771, 845, 56, 56], ["tie", 833, 884, 30, 74], ["note", 787, 934, 42, 46],
  ["case", 890, 850, 80, 70], ["bike", 650, 968, 130, 100], ["page", 808, 990, 72, 70], ["coin", 912, 936, 44, 44],
  ["mic", 676, 1050, 30, 48], ["folder", 772, 1071, 28, 20], ["bag", 727, 1113, 54, 48], ["cam", 815, 1093, 54, 44],
  ["corn", 856, 1138, 62, 68], ["phone", 670, 1177, 122, 112], ["check", 800, 1199, 54, 54],
  ["basket", 868, 1226, 90, 76], ["folder", 812, 1266, 28, 20], ["spark", 254, 884, 26, 34],
  ["tag", 672, 1310, 92, 90], ["blocks", 786, 1324, 76, 58], ["voice", 872, 1328, 72, 64],
  ["folder", 673, 1420, 28, 22], ["lens", 738, 1416, 26, 26], ["cursor", 787, 1403, 64, 60],
  ["case", 867, 1420, 46, 42], ["blocks", 673, 1446, 56, 56], ["blocks", 771, 1464, 34, 34],
  ["pill", 646, 1513, 52, 42], ["pill", 699, 1513, 52, 42], ["pill", 752, 1513, 52, 42],
  ["price", 792, 1502, 104, 80], ["doc", 920, 1492, 44, 50], ["spark", 681, 1562, 24, 24],
  ["lens", 704, 1596, 26, 22], ["heart", 848, 1602, 32, 30], ["bag", 698, 1646, 34, 40],
  ["cup", 770, 1632, 62, 74], ["spark", 842, 1648, 26, 26],
  ["doc", -20, 130, 48, 58], ["pin", -14, 260, 46, 52], ["coin", -44, 500, 76, 76],
  ["cloud", -34, 640, 60, 46], ["bag", -22, 780, 50, 44], ["page", -50, 890, 74, 76], ["coin", -40, 1020, 70, 70],
  ["tag", -40, 1150, 66, 72], ["case", -44, 1300, 70, 60], ["roll", -40, 1430, 64, 64], ["coin", -46, 1560, 70, 70]
];
const dots = [
  [84, 46, 5], [118, 85, 7], [184, 77, 4], [265, 65, 10], [322, 80, 8], [368, 65, 9], [904, 84, 7], [772, 110, 8],
  [808, 90, 5], [868, 475, 7], [780, 535, 6], [788, 565, 4], [912, 537, 4], [867, 610, 5], [807, 590, 4],
  [786, 654, 4], [840, 687, 4], [870, 684, 7], [858, 714, 5], [763, 733, 7], [783, 762, 4], [930, 800, 7],
  [870, 855, 5], [842, 870, 4], [767, 906, 7], [873, 903, 4], [798, 919, 4], [820, 917, 4], [766, 938, 4],
  [738, 944, 4], [894, 938, 4], [884, 967, 4], [853, 974, 4], [908, 997, 7], [791, 1004, 4], [678, 1033, 4],
  [734, 1088, 7], [821, 1079, 4], [885, 1077, 7], [899, 1112, 4], [925, 1120, 4], [699, 1153, 4], [796, 1152, 7],
  [821, 1168, 7], [779, 1190, 4], [883, 1221, 4], [784, 1287, 4], [670, 1306, 4], [713, 1300, 4], [807, 1313, 4],
  [863, 1306, 7], [896, 1317, 4], [754, 1309, 9], [275, 866, 4], [392, 875, 7], [467, 897, 4], [452, 925, 7],
  [624, 904, 4], [781, 1336, 7], [769, 1380, 5], [813, 1391, 4], [843, 1396, 4], [873, 1407, 4], [930, 1384, 4],
  [921, 1410, 10], [774, 1411, 4], [718, 1428, 4], [776, 1447, 7], [839, 1475, 4], [876, 1480, 7], [930, 1475, 9],
  [816, 1505, 10], [905, 1509, 4], [904, 1548, 7], [810, 1553, 4], [772, 1574, 7], [737, 1576, 4], [799, 1599, 4],
  [820, 1607, 10], [760, 1610, 10], [784, 1617, 4], [692, 1635, 4], [743, 1640, 4], [886, 1646, 4], [915, 1656, 7]
];
document.getElementById("wallpaper").innerHTML +=
  doodles.map(([name, x, y, w, h]) => `<use href="#d-${name}" x="${x}" y="${y}" width="${w}" height="${h}"/>`).join("") +
  dots.map(([x, y, r]) => `<circle cx="${x}" cy="${y}" r="${r}"/>`).join("");
```
